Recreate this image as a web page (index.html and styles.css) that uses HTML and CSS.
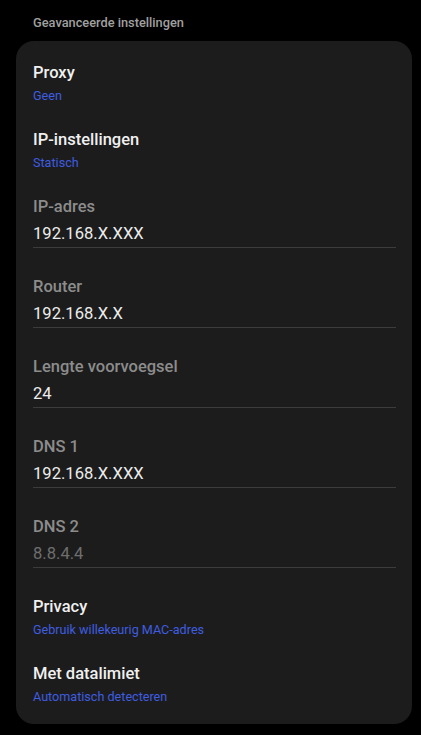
FILE: index.html
```html
<!DOCTYPE html>
<html>
<head>
<meta charset="utf-8">
<link rel="stylesheet" href="styles.css">
</head>
<body>
<div class="section-title">Geavanceerde instellingen</div>
<div class="card">
  <div class="row">
    <div class="title">Proxy</div>
    <div class="sub">Geen</div>
  </div>
  <div class="row">
    <div class="title">IP-instellingen</div>
    <div class="sub">Statisch</div>
  </div>
  <div class="field">
    <div class="label">IP-adres</div>
    <div class="value">192.168.X.XXX</div>
  </div>
  <div class="field">
    <div class="label">Router</div>
    <div class="value">192.168.X.X</div>
  </div>
  <div class="field">
    <div class="label">Lengte voorvoegsel</div>
    <div class="value">24</div>
  </div>
  <div class="field">
    <div class="label">DNS 1</div>
    <div class="value">192.168.X.XXX</div>
  </div>
  <div class="field">
    <div class="label">DNS 2</div>
    <div class="value hint">8.8.4.4</div>
  </div>
  <div class="row">
    <div class="title">Privacy</div>
    <div class="sub">Gebruik willekeurig MAC-adres</div>
  </div>
  <div class="row">
    <div class="title">Met datalimiet</div>
    <div class="sub">Automatisch detecteren</div>
  </div>
</div>
</body>
</html>
```
FILE: styles.css
```css
html, body {
  margin: 0;
  padding: 0;
  background: #000;
  font-family: Roboto, "Noto Sans", sans-serif;
}
.section-title {
  padding: 14px 0 0 33px;
  height: 27px;
  line-height: 18px;
  font-size: 12.8px;
  font-weight: 500;
  color: #a0a0a0;
}
.card {
  margin-left: 16px;
  width: 396px;
  box-sizing: border-box;
  background: #1c1c1c;
  border-radius: 18px;
  padding: 9px 16px 6px 17px;
}
.row {
  padding: 12px 0;
}
.title {
  font-size: 16.5px;
  font-weight: 500;
  line-height: 22px;
  color: #f0f0f0;
}
.sub {
  margin-top: 3px;
  font-size: 12.6px;
  line-height: 18px;
  color: #3f5de0;
}
.field {
  padding: 12px 0 2px;
  border-bottom: 1px solid #3c3c3c;
  margin-bottom: 16px;
}
.label {
  font-size: 16.5px;
  font-weight: 500;
  line-height: 22px;
  color: #8c8c8c;
}
.value {
  margin-top: 5px;
  font-size: 16.6px;
  line-height: 22px;
  color: #ececec;
}
.value.hint {
  color: #6e6e6e;
}
.field:last-of-type {
  margin-bottom: 4px;
}
```
